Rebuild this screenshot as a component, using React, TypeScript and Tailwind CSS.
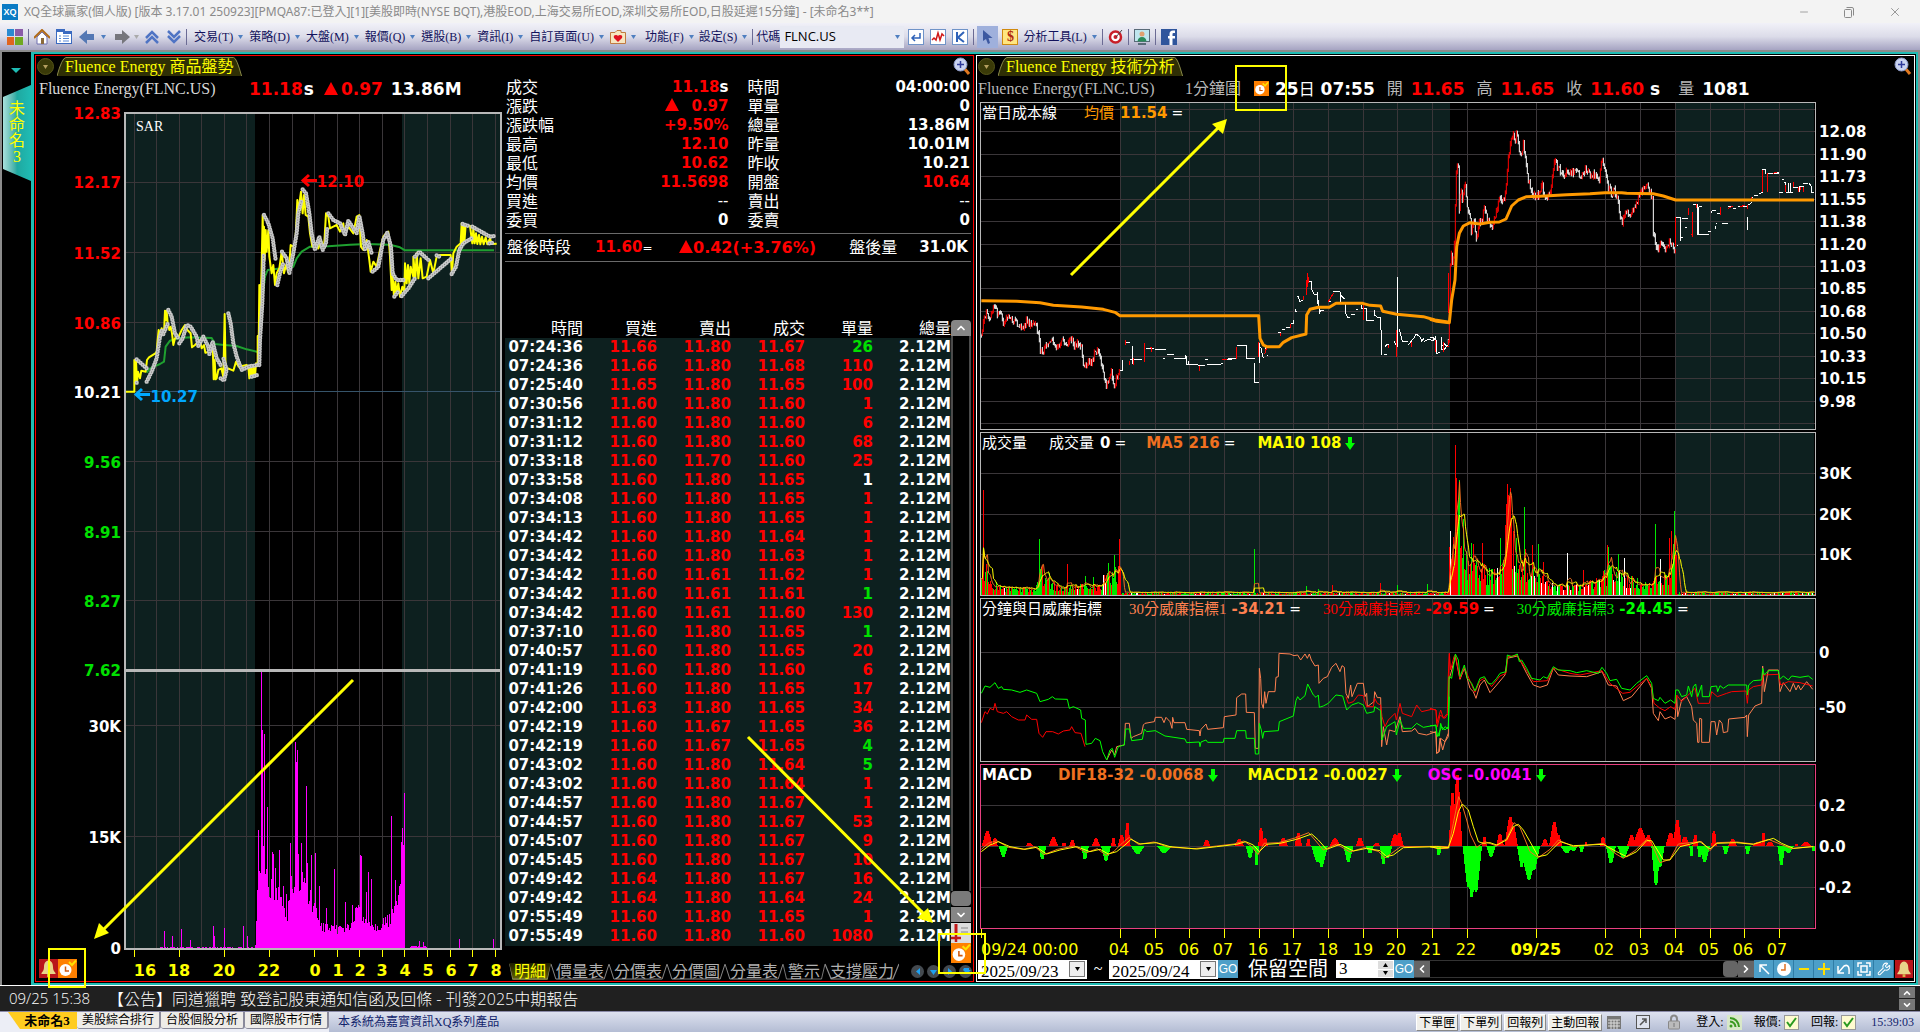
import { ReactNode } from "react";
import clsx from "clsx";
import { ChevronDown, ChevronLeft, ChevronRight, ChevronUp, Minus, Wrench, X } from "lucide-react";

const CJK = "font-['Liberation_Serif','Noto_Sans_CJK_TC',sans-serif]";
const NUM = "font-['DejaVu_Sans','Noto_Sans_CJK_TC',sans-serif] font-bold";

const GRID = "#3a3639";
const SHADE = "#0d201f";

/* ---------- data ---------- */

const TICKS = `07:24:36 11.66 11.80 11.67 26 g
07:24:36 11.66 11.80 11.68 110 r
07:25:40 11.65 11.80 11.65 100 r
07:30:56 11.60 11.80 11.60 1 r
07:31:12 11.60 11.80 11.60 6 r
07:31:12 11.60 11.80 11.60 68 r
07:33:18 11.60 11.70 11.60 25 r
07:33:58 11.60 11.80 11.65 1 w
07:34:08 11.60 11.80 11.65 1 r
07:34:13 11.60 11.80 11.65 1 r
07:34:42 11.60 11.80 11.64 1 r
07:34:42 11.60 11.80 11.63 1 r
07:34:42 11.60 11.61 11.62 1 r
07:34:42 11.60 11.61 11.61 1 g
07:34:42 11.60 11.61 11.60 130 r
07:37:10 11.60 11.80 11.65 1 g
07:40:57 11.60 11.80 11.65 20 r
07:41:19 11.60 11.80 11.60 6 r
07:41:26 11.60 11.80 11.65 17 r
07:42:00 11.63 11.80 11.65 34 r
07:42:19 11.60 11.67 11.65 36 r
07:42:19 11.60 11.67 11.65 4 g
07:43:02 11.60 11.80 11.64 5 g
07:43:02 11.60 11.80 11.64 1 r
07:44:57 11.60 11.80 11.67 1 r
07:44:57 11.60 11.80 11.67 53 r
07:45:07 11.60 11.80 11.67 9 r
07:45:45 11.60 11.80 11.67 10 r
07:49:42 11.64 11.80 11.67 16 r
07:49:42 11.64 11.80 11.64 24 r
07:55:49 11.60 11.80 11.65 1 r
07:55:49 11.60 11.80 11.60 1080 r`
  .split("\n")
  .map((row) => row.split(" "));

const QUOTES: [string, ReactNode, string, string, ReactNode, string][] = [
  ["成交", <>11.18<span className="text-white">s</span></>, "text-[#ff0000]", "時間", "04:00:00", "text-white"],
  ["漲跌", <><UpMark /><span className="ml-3">0.97</span></>, "text-[#ff0000]", "單量", "0", "text-white"],
  ["漲跌幅", "+9.50%", "text-[#ff0000]", "總量", "13.86M", "text-white"],
  ["最高", "12.10", "text-[#ff0000]", "昨量", "10.01M", "text-white"],
  ["最低", "10.62", "text-[#ff0000]", "昨收", "10.21", "text-white"],
  ["均價", "11.5698", "text-[#ff0000]", "開盤", "10.64", "text-[#ff0000]"],
  ["買進", "--", "text-white font-normal", "賣出", "--", "text-white font-normal"],
  ["委買", "0", "text-white", "委賣", "0", "text-white"],
];

type Pt = [number, number];
const pts = (s: string) => s.trim().split(/\s+/).map((p) => p.split(",").map(Number) as Pt);

// small seeded generator, keeps the traces stable between renders
function rng(seed: number) {
  let s = seed;
  return () => {
    s = (s * 1103515245 + 12345) % 2147483648;
    return s / 2147483648;
  };
}

function at(points: Pt[], x: number) {
  for (let i = 1; i < points.length; i++) {
    const [x0, y0] = points[i - 1];
    const [x1, y1] = points[i];
    if (x <= x1) return y0 + ((y1 - y0) * (x - x0)) / (x1 - x0 || 1);
  }
  return points[points.length - 1][1];
}

// one-minute candles around a guide line; rising ones go to `up`
function candles(src: string, seed: number) {
  const p = pts(src);
  const rand = rng(seed);
  let up = "";
  let down = "";
  let prev = p[0][1];
  for (let x = p[0][0]; x <= p[p.length - 1][0]; x += 3) {
    const y = at(p, x) + (rand() - 0.5) * 20;
    const a = Math.min(prev, y) - rand() * 9;
    const b = Math.max(prev, y) + rand() * 9;
    const d = `M${x} ${a.toFixed(0)}V${b.toFixed(0)}`;
    if (y < prev - 3) up += d;
    else down += d;
    prev = y;
  }
  return { up, down };
}

/* ---------- traces (units: a third of a plot unit) ---------- */

const YELLOW =
  "372,875 403,875 403,780 405,848 408,782 411,850 414,815 420,835 424,812 437,815 441,780 447,772 466,760 470,755 472,730 476,690 480,705 485,685 492,700 495,632 498,660 500,632 503,670 508,690 512,680 516,700 520,735 525,715 535,712 545,690 555,675 562,690 572,700 576,742 585,735 600,720 605,745 612,735 616,758 630,755 638,735 641,838 644,780 647,838 650,835 655,810 664,805 670,830 674,642 677,820 684,805 700,812 708,785 716,800 740,795 745,800 748,835 752,795 756,832 760,800 765,830 768,790 773,795 773,708 776,740 778,555 780,640 783,560 785,500 788,345 790,460 792,380 794,480 797,390 800,455 805,390 808,470 815,520 820,495 825,555 830,520 838,505 845,455 852,520 858,495 866,520 872,435 880,440 886,430 890,345 892,300 895,340 897,320 903,275 908,340 912,285 917,345 925,350 930,400 937,440 945,430 955,445 963,420 972,445 978,340 985,350 990,385 1000,380 1010,375 1020,395 1030,370 1033,405 1045,380 1060,400 1070,350 1078,345 1083,440 1090,450 1100,420 1108,480 1112,515 1120,485 1130,500 1140,450 1150,410 1158,400 1165,395 1170,470 1175,570 1178,530 1182,590 1186,545 1190,580 1195,550 1200,590 1207,560 1213,575 1215,490 1220,550 1224,495 1228,550 1232,500 1240,530 1240,470 1246,535 1250,460 1255,535 1262,475 1268,535 1280,530 1290,480 1300,520 1310,470 1320,465 1352,465 1356,520 1360,460 1370,440 1382,430 1385,370 1387,430 1390,372 1393,430 1397,375 1410,378 1417,430 1420,385 1424,430 1428,400 1432,432 1437,405 1441,433 1446,410 1451,433 1457,412 1462,433 1470,415 1475,432 1490,431";
const AVG =
  "440,818 450,805 480,792 492,785 497,740 510,722 535,715 570,712 635,714 645,732 672,735 710,738 740,748 770,755 776,755 780,680 788,590 795,530 803,510 880,500 890,475 905,455 930,440 985,439 1050,434 1100,432 1170,434 1200,442 1215,451 1482,451";
const SAR = [
  "410,778 440,805",
  "410,848 411,846",
  "440,845 455,815 470,775 480,710 487,688",
  "490,702 503,672",
  "505,630 515,650 525,700 537,718",
  "538,730 548,715 560,675 572,680 590,710 595,738 610,710 625,740 628,762 638,725 650,775 665,800",
  "662,835 672,842 680,810 670,775",
  "685,640 692,670 700,730 710,770 725,810 745,800 772,795",
  "755,830 772,825",
  "778,795 780,720 787,610 790,520 791,460",
  "792,345 805,370 818,415 827,480",
  "832,555 840,520 850,490",
  "846,455 860,475 868,520 880,460 890,400 895,340 905,300",
  "908,268 918,280 928,340 935,400 945,450 958,410 968,450 978,430 982,380",
  "985,340 1000,360 1020,370 1035,405 1045,362 1060,385 1070,400 1078,348 1088,400 1095,450 1105,425 1115,460",
  "1118,515 1135,500 1150,420 1162,398 1173,440 1178,520 1190,540 1212,540",
  "1183,590 1195,575",
  "1205,588 1225,565 1245,535",
  "1245,470 1258,455 1285,480",
  "1285,535 1320,505 1355,475",
  "1310,466 1318,470",
  "1355,522 1368,500 1378,450 1390,430 1415,415",
  "1388,372 1405,378",
  "1417,380 1470,410 1485,408",
  "1468,430 1480,428",
];

const LEFT_SPIKES = pts(
  "775,810 785,333 788,510 793,522 790,858 802,741 817,877 821,882 826,925 838,870 850,978 859,1003 871,849 886,546 889,606 892,570 895,882 904,849 907,936 919,678 922,909 934,885 946,879 958,978 979,1044 1003,927 1036,1026 1057,1035 1081,885 1084,888 1099,996 1105,936 1114,957 1174,768 1186,960 1204,846 1207,804 1210,855 1213,699 493,1114 517,1129 544,1107 572,1140 640,1098 643,1127 673,1104 730,1098 742,1128 1258,1142 1270,1146 1378,1137 1480,1137"
);

function leftVolume() {
  const rand = rng(7);
  const guide = pts("372,1161 460,1161 480,1160 765,1160 768,1150 774,980 800,960 830,1000 865,1060 872,980 900,960 925,1010 950,1060 965,1100 1000,1110 1050,1100 1075,1050 1100,1080 1130,1100 1170,1080 1195,1040 1205,900 1213,880 1216,1162 1240,1159 1275,1159 1290,1162 1490,1161");
  let d = "";
  for (let x = 374; x < 1490; x += 3) {
    let y = at(guide, x);
    y += (1162 - y) * (rand() - 0.5) * 0.5;
    if (y < 1160) d += `M${x} 1163V${y.toFixed(0)}`;
  }
  LEFT_SPIKES.forEach(([x, y]) => (d += `M${x} 1163V${y}`));
  return d;
}

const ORANGE_A =
  "34,602 140,604 210,608 250,616 335,621 400,628 435,637 450,647 866,647 870,715 880,735 890,740 928,740 940,727 965,713 1008,702 1010,645 1020,628 1045,622 1078,622 1098,610 1178,610 1200,616 1232,618 1238,634 1280,643 1360,650 1395,660 1438,667";
const ORANGE_B =
  "0,658 20,664 58,668 65,600 75,540 80,440 88,400 100,378 120,368 150,372 180,367 208,366 228,357 245,318 265,300 290,290 330,289 410,284 480,281 525,278 575,278 590,280 670,281 700,288 737,300 1152,300";

const PRICE_A = candles(
  "34,705 40,665 50,635 60,650 75,612 80,640 95,650 98,675 110,645 125,660 140,670 150,682 165,680 170,660 185,680 195,675 205,700 210,750 218,760 228,735 238,735 247,710 256,740 268,735 273,718 290,735 303,715 315,740 325,730 335,745 338,780 345,800 355,780 368,785 376,752 390,770 398,810 404,840 411,860 418,830 425,815 434,868 440,825 450,812",
  3
);
const PRICE_B = candles(
  "55,720 58,640 60,540 62,440 68,490 74,420 77,260 80,190 85,205 88,340 93,250 97,310 105,235 112,330 120,345 124,400 132,360 140,420 148,360 155,370 162,315 170,350 180,380 190,370 200,330 210,295 222,305 230,255 234,180 240,140 248,100 255,120 260,95 267,145 275,165 280,130 287,180 290,215 298,250 306,275 315,290 325,285 337,255 342,290 352,285 360,280 368,225 373,178 382,200 390,210 405,225 412,215 430,220 440,210 452,240 467,205 480,230 490,220 508,235 515,185 525,205 535,260 545,285 552,270 562,290 570,340 578,370 585,325 600,350 608,325 615,330 625,290 640,265 650,245 658,270 668,300 670,400 678,430 685,455 690,415 705,455 722,420 732,450 737,440",
  11
);
const THIN_A = {
  white:
    "M450 812H457V780M466 728H480M487 737V792M480 778H517M487 790H493M528 747H553M555 748H588M590 763H612M580 775H585M612 776H645L648 766L650 795H684M656 782V795M684 797H705M705 778H713M711 794H740L760 791M762 778H785M775 776H798M800 737H829V776H854M853 790V848H866M866 770L868 730L870 790M872 740L880 775M884 745L892 742M890 766H893M925 697H933M935 690H945M948 683H960M962 672H970V660M976 634H980M978 628V634M983 587L990 605L1000 600M1014 530L1016 545H1024L1026 570L1032 583H1042L1044 575V612M1046 600L1048 640L1052 632H1061M1075 605H1083M1090 576H1110L1112 605M1112 585L1124 598M1126 610L1128 642L1133 653H1140M1142 643H1155M1158 630H1165M1176 616V625H1188L1190 662H1213M1214 630V645L1222 652H1232L1235 765M1243 765H1250M1245 740L1250 735H1258M1272 722L1277 735M1282 532V740M1288 688L1292 705L1297 725H1315M1315 735L1325 722L1333 712L1338 702L1350 710L1355 722L1362 715M1362 725L1375 718L1390 722L1396 713L1400 760L1408 758M1412 728L1425 748L1430 738",
  red: "M466 720V736M523 730V785M540 742H546V757M480 782V795M490 775V795M690 797V812M757 778H770M800 776V740M866 725V770M884 762L890 742M932 707V700M962 672V685M1001 600V588M1009 585L1012 520V560M1015 530V548M1075 605L1090 580M1182 610V660M1279 690V770M1256 735V745M1325 740V725M1422 755V725M1437 520V640M1430 740H1436",
};
const THIN_B = {
  white:
    "M0 712H10L14 720H18L20 763M24 757H30M34 711V748H44M42 728L47 737H54M738 352H752V423M740 438H745M750 412H759M757 357H773V353M765 382H770M788 313H803V405M806 320H815M804 405H836M804 313V405M807 320V403M834 395H842M843 338L846 332H858M862 341H870M858 372H862M858 378V388M876 370H894M895 320H905M910 325H918M925 320H950M953 352V390M956 315L965 308M964 293H970M972 288L985 285M988 282L998 277M995 208H1006V221M1012 220H1046M1036 217H1046M1057 238H1062M1062 247H1068V262M1047 277H1060M1068 277H1088M1075 250V275M1082 250V278M1088 262H1110V277M1108 260H1122M1120 250H1135M1138 250L1145 262V277H1152",
  red: "M18 720V755M42 752V728M55 735V720M737 440V352M775 325V345M787 335V410M783 405H790M800 313V325M871 320V345M895 325L908 318M930 320L945 316M952 315V328M965 300V292M998 277V210M1012 275V220M1030 220L1040 217M1066 277V255M1090 262V246M1105 277V262M1112 262V270M1120 277V262",
};

// volume per minute: guide height plus a list of known spikes
const VOL_SPIKES = pts(
  "983,105 1039,56 1042,29 1049,22 1067,31 1085,19 1093,18 1103,20 1108,32 1114,40 1119,56 1254,46 1306,9 1318,6 1332,10 1380,12 1397,10 1427,11 1449,48 1450,64 1452,40 1455,150 1456,117 1457,80 1458,97 1459,115 1463,76 1471,52 1473,51 1482,52 1500,57 1505,70 1506,91 1507,111 1508,100 1509,99 1510,107 1513,64 1516,57 1524,88 1525,46 1532,50 1538,51 1543,33 1567,42 1583,25 1607,50 1608,48 1618,41 1624,37 1655,71 1660,36 1669,57 1671,64 1674,84 1675,60 1676,40"
);
const VOL = (() => {
  const rand = rng(23);
  const guide = pts("981,12 984,30 990,12 1005,6 1035,5 1040,22 1048,14 1060,6 1080,8 1100,7 1106,18 1120,28 1121,1 1449,1 1450,30 1456,60 1462,45 1470,26 1500,20 1506,60 1512,55 1518,28 1540,16 1552,9 1575,7 1600,14 1608,24 1625,16 1650,9 1656,20 1668,18 1676,60 1677,1 1816,1");
  const v: number[] = [];
  for (let x = 981; x < 1815; x++) {
    const g = at(guide, x);
    v.push(Math.max(g > 2 ? g * (0.4 + rand() * 0.95) : rand() * 2.2, 0.5));
  }
  VOL_SPIKES.forEach(([x, h]) => (v[x - 981] = h));
  return v;
})();

function volumeBars() {
  const rand = rng(5);
  const out = { red: "", green: "", white: "" };
  VOL.forEach((h, i) => {
    const x = 981 + i;
    const r = rand();
    const red = x === 983 || x === 1119 || (x > 1450 && x < 1458) || (x > 1504 && x < 1512);
    const green = x === 1039 || x === 1254 || x === 1524 || x === 1674 || x === 1655 || x === 1459;
    const key = red ? "red" : green ? "green" : x === 1450 || x === 1567 ? "white" : r < 0.48 ? "red" : r < 0.94 ? "green" : "white";
    out[key] += `M${x + 0.5} 594.5V${(594.5 - h).toFixed(1)}`;
  });
  return out;
}
const BARS = volumeBars();

const average = (n: number) =>
  VOL.map((_, i) => {
    const part = VOL.slice(Math.max(0, i - n + 1), i + 1);
    return `${981.5 + i},${(593.5 - part.reduce((a, b) => a + b, 0) / part.length).toFixed(1)}`;
  }).join(" ");

const WR = {
  orangeA:
    "410,990 425,960 434,975 440,950 452,947 463,945 466,880 478,880 483,925 490,920 515,910 520,885 525,880 553,875 556,862 575,862 582,878 588,862 600,875 606,895 608,862 612,878 645,878 650,898 688,902 690,918 693,898 708,882 713,898 760,893 763,860 798,855 800,803 815,792 827,792 829,847 853,848 856,955 866,955 868,715 872,745 875,820 880,835 884,785 888,820 895,785 915,785 918,742 925,740 927,670 960,672 972,677 983,675 992,690 1005,672 1012,685 1018,672 1024,690 1035,708 1045,705 1047,760 1060,745 1072,740 1085,712 1098,700 1110,725 1116,707 1123,712 1128,790 1135,805 1142,765 1146,800 1162,760 1180,760 1185,800 1190,790 1192,830 1212,815 1214,785 1222,803 1232,803 1235,950 1240,890 1250,945 1258,900 1275,905 1290,860 1297,905 1325,903 1335,895 1345,910 1370,915 1398,905 1400,970 1408,965 1412,925 1425,935 1435,910",
  redA:
    "34,878 45,845 52,852 60,835 70,840 75,820 82,845 100,850 110,845 125,860 145,870 165,870 170,855 185,868 200,868 207,910 218,922 228,905 248,905 265,912 280,903 300,900 305,890 315,908 333,910 345,950",
  redA2:
    "1128,800 1135,820 1150,815 1165,795 1180,797 1190,830 1210,830 1214,805 1222,820 1232,825 1236,860 1245,890 1255,870 1275,850 1279,870 1290,820 1297,850 1325,860 1340,825 1355,845 1385,838 1398,840 1402,890 1410,855 1425,865 1435,850 1438,670",
  greenA:
    "34,790 45,768 60,772 75,758 85,775 95,770 100,778 125,780 150,787 170,780 200,790 210,815 235,808 247,800 256,807 292,808 298,835 310,830 332,840 335,865 346,870 348,943 365,940 376,925 390,932 398,965 410,990 420,960 427,955 434,982 445,950 463,945 467,897 478,897 485,932 517,928 523,897 530,905 556,902 585,918 612,922 645,927 650,938 688,936 690,950 693,936 708,930 713,937 760,937 762,925 795,925 800,902 827,902 829,925 853,925 856,972 866,972 868,880 874,900 878,925 882,905 925,902 928,875 970,858 978,812 983,800 990,810 1005,797 1013,762 1030,795 1038,802 1045,795 1048,832 1060,828 1075,820 1098,795 1118,798 1130,840 1145,825 1165,818 1180,825 1190,850 1212,845 1214,830 1232,842 1236,930 1250,890 1275,875 1279,915 1290,870 1300,895 1325,895 1340,880 1360,892 1398,885 1402,920 1415,890 1425,900 1435,890 1438,800",
  greenB:
    "0,887 18,887 20,915 28,918 32,880 38,900 45,890 55,897 57,740 65,745 76,672 85,690 90,740 103,705 112,745 125,760 135,783 150,745 163,740 175,760 185,762 200,745 210,730 228,725 232,675 245,680 262,672 268,695 275,690 290,715 305,745 330,750 340,740 352,745 370,710 385,720 420,722 440,728 470,722 505,730 516,712 530,730 540,752 560,748 575,775 600,780 620,760 650,737 665,760 670,805 685,812 690,802 705,820 722,810 735,820 737,780 745,780 755,800 770,795 775,768 785,800 790,770 797,762 803,800 815,765 817,800 838,800 843,770 860,768 863,785 870,767 880,775 895,765 950,765 952,795 956,765 970,752 995,750 998,715 1003,735 1015,722 1045,722 1050,748 1060,738 1075,750 1085,738 1110,742 1135,738 1148,748",
  redB:
    "0,835 18,840 20,880 32,840 40,865 52,850 55,735 58,670 62,720 72,680 76,675 90,745 103,712 125,765 135,787 150,752 163,745 185,770 210,738 228,730 234,680 262,676 290,722 310,755 352,752 370,714 420,730 450,735 516,722 540,760 578,790 600,787 650,745 665,770 672,820 690,835 705,842 722,830 735,838 740,795 755,815 775,795 795,775 805,820 838,820 845,785 862,800 890,790 905,785 948,783 952,820 956,780 970,770 995,765 1000,735 1045,733 1052,765 1075,755 1110,758 1148,768",
  orangeB:
    "0,905 18,908 20,970 26,965 30,925 38,960 45,935 55,920 57,750 76,680 90,748 103,715 120,775 130,785 138,805 150,765 163,750 180,788 200,765 225,735 232,685 262,678 275,700 290,730 310,765 330,772 352,765 370,715 385,735 420,738 470,740 516,725 535,765 560,768 580,812 605,800 650,745 665,775 670,850 685,872 690,845 705,867 722,860 735,868 740,800 743,860 755,810 770,800 785,830 790,870 800,880 803,937 807,937 809,865 815,867 815,937 838,937 843,875 855,875 860,915 868,870 876,880 880,908 893,905 896,867 945,862 950,855 952,920 956,855 975,828 995,820 998,708 1003,785 1015,720 1045,720 1050,785 1060,758 1080,785 1090,760 1098,780 1105,765 1112,780 1130,755 1148,778",
};

// [centre, peak y, half width]
const OSC_A: [number, number, number][] = [
  [52, 1203, 17], [75, 1225, 9], [178, 1238, 12], [250, 1222, 15], [282, 1238, 8], [307, 1230, 10], [378, 1225, 13], [430, 1225, 8], [455, 1215, 12], [472, 1180, 10], [710, 1230, 12], [808, 1228, 15], [873, 1195, 9], [885, 1225, 10], [940, 1225, 15], [985, 1210, 12], [1015, 1228, 8], [1095, 1225, 17], [1170, 1223, 13], [1220, 1238, 12], [1275, 1212, 15], [1288, 1210, 14],
  [100, 1280, 14], [217, 1288, 12], [345, 1288, 12], [408, 1292, 15], [503, 1273, 20], [583, 1270, 22], [840, 1283, 13], [860, 1305, 8], [1042, 1295, 18], [1055, 1310, 18], [1135, 1295, 15], [1200, 1270, 12], [1240, 1303, 10], [1253, 1285, 14], [1406, 1275, 8],
];
const OSC_B: [number, number, number][] = [
  [67, 1090, 11], [82, 1035, 15], [163, 1222, 8], [210, 1213, 12], [241, 1160, 18], [250, 1190, 14], [345, 1228, 12], [373, 1175, 16], [385, 1215, 12], [468, 1235, 6], [519, 1222, 10], [605, 1215, 15], [631, 1193, 24], [655, 1215, 14], [722, 1208, 16], [742, 1170, 14], [765, 1220, 16], [796, 1216, 9], [852, 1204, 9], [908, 1228, 14], [985, 1235, 18], [1000, 1210, 6], [1020, 1235, 14], [1100, 1243, 6], [1128, 1235, 16],
  [27, 1275, 8], [115, 1370, 17], [125, 1400, 20], [138, 1385, 18], [183, 1280, 14], [275, 1310, 14], [297, 1350, 26], [312, 1320, 18], [410, 1270, 18], [430, 1262, 15], [455, 1265, 8], [543, 1300, 15], [580, 1285, 18], [678, 1365, 14], [690, 1310, 14], [784, 1278, 6], [808, 1280, 7], [824, 1297, 16], [887, 1272, 10], [953, 1272, 9], [1054, 1305, 12], [1075, 1270, 16], [1150, 1262, 5],
];
const MACD = {
  yellowA:
    "34,1265 60,1245 85,1235 120,1250 165,1258 200,1252 230,1272 270,1260 320,1250 360,1265 390,1258 415,1272 440,1265 465,1245 483,1228 510,1242 560,1238 600,1250 680,1257 740,1250 800,1243 827,1235 850,1245 868,1265 890,1243 930,1240 980,1228 1025,1212 1045,1230 1070,1258 1110,1243 1150,1263 1190,1255 1230,1262 1250,1280 1270,1275 1300,1253 1400,1250 1438,1253",
  orangeA:
    "34,1258 55,1240 80,1232 115,1252 160,1258 195,1250 222,1274 262,1258 312,1248 350,1268 382,1256 408,1276 432,1264 458,1238 478,1222 505,1243 552,1236 592,1251 672,1256 732,1249 792,1242 822,1233 845,1250 864,1274 882,1240 925,1238 975,1224 1016,1208 1035,1230 1060,1260 1100,1242 1140,1266 1182,1253 1225,1264 1244,1284 1262,1272 1292,1250 1400,1249 1438,1250",
  yellowB:
    "0,1250 25,1255 55,1253 70,1210 85,1145 97,1122 115,1140 130,1190 145,1235 160,1240 180,1238 200,1245 230,1230 250,1190 265,1183 280,1200 300,1235 325,1280 350,1275 390,1235 430,1247 520,1243 560,1265 590,1280 620,1265 650,1232 665,1232 700,1290 720,1290 750,1250 790,1240 810,1235 840,1257 860,1240 920,1238 970,1243 1030,1225 1055,1240 1090,1255 1150,1250",
  orangeB:
    "0,1250 25,1256 55,1255 70,1180 86,1100 95,1120 110,1170 122,1215 140,1252 165,1235 200,1248 230,1225 252,1178 270,1192 300,1265 325,1283 360,1258 385,1230 430,1250 520,1240 555,1270 580,1285 615,1262 650,1228 665,1240 690,1298 720,1288 745,1242 790,1237 815,1235 840,1262 860,1238 920,1236 970,1242 1015,1228 1050,1242 1085,1256 1150,1249",
};

/* ---------- drawing helpers ---------- */

const third = (x: number, y: number) => `translate(${x} ${y}) scale(0.33333)`;

function Trace({ points, x, y, color, width = 1 }: { points: string; x: number; y: number; color: string; width?: number }) {
  return (
    <polyline points={points} transform={third(x, y)} fill="none" stroke={color} strokeWidth={width} strokeLinejoin="round" vectorEffect="non-scaling-stroke" />
  );
}

function Strokes({ d, x, y, color }: { d: string; x: number; y: number; color: string }) {
  return <path d={d} transform={third(x, y)} fill="none" stroke={color} strokeWidth={1} vectorEffect="non-scaling-stroke" />;
}

function Humps({ list, x, y }: { list: [number, number, number][]; x: number; y: number }) {
  return (
    <g transform={third(x, y)} shapeRendering="crispEdges">
      {list.map(([c, p, w], i) => (
        <path
          key={i}
          d={`M${c - w} 1249L${c - w * 0.7} ${1249 + (p - 1249) * 0.4}L${c - 4} ${p}H${c + 4}L${c + w * 0.7} ${1249 + (p - 1249) * 0.4}L${c + w} 1249Z`}
          fill={p < 1249 ? "#ff0000" : "#00ff00"}
        />
      ))}
    </g>
  );
}

function UpMark() {
  return (
    <svg viewBox="0 0 14 13" className="inline-block w-[14px] h-[13px] align-baseline" fill="currentColor">
      <path d="M7 0L14 13H0Z" />
    </svg>
  );
}

function DownMark() {
  return (
    <svg viewBox="0 0 10 13" className="inline-block w-[10px] h-[13px] ml-1" fill="#00ff00">
      <path d="M3 0H7V6H10L5 13L0 6H3Z" />
    </svg>
  );
}

function AxisY({ labels, top, height, className }: { labels: [string, number, string?][]; top: number; height: number; className: string }) {
  return (
    <div className={clsx("relative shrink-0 text-[15px] leading-[18px]", NUM, className)}>
      {labels.map(([text, y, color], i) => (
        <span key={i} className={clsx("absolute inset-x-0 -translate-y-1/2", color)} style={{ top: `${((y - top) / height) * 100}%` }}>
          {text}
        </span>
      ))}
    </div>
  );
}

/* ---------- icons ---------- */

function ClockIcon({ className }: { className: string }) {
  return (
    <svg viewBox="0 0 19 19" className={className}>
      <rect width="19" height="19" fill="#ff8000" />
      <circle cx="7.500" cy="11" r="6" fill="#fff" />
      <path d="M7.500 7.500V12H11" stroke="#d05a10" strokeWidth="1.500" fill="none" />
      <path d="M11 3L14 6L18 1.500" stroke="#ffe000" strokeWidth="2" fill="none" />
    </svg>
  );
}

function BellIcon({ className }: { className: string }) {
  return (
    <svg viewBox="0 0 19 19" className={className}>
      <rect width="19" height="19" fill="#b9151a" />
      <path d="M9.500 1.500C6 2 5 5 5 8C5 11 4 12.500 2.500 14V15H16.500V14C15 12.500 14 11 14 8C14 5 13 2 9.500 1.500Z" fill="#e9d58a" />
      <rect x="8" y="15" width="3" height="3" fill="#d8b04a" />
    </svg>
  );
}

function ZoomIcon() {
  return (
    <svg viewBox="0 0 18 18" className="w-[18px] h-[18px]">
      <path d="M11 11L16 17" stroke="#e07820" strokeWidth="3" />
      <circle cx="7.500" cy="7.500" r="6.500" fill="#c9d3f0" stroke="#8f9cc8" />
      <path d="M7.500 4V11M4 7.500H11" stroke="#2e3a9a" strokeWidth="1.500" />
    </svg>
  );
}

/* ---------- frame ---------- */

function TitleBar() {
  return (
    <header className="h-[23px] flex items-center bg-[#f3f3f3] text-[#8a8a8a] pl-[2px] shrink-0">
      <span className="size-4 bg-[#0a7bc4] text-white text-[9px] font-bold leading-4 text-center font-['Liberation_Sans',sans-serif]">XQ</span>
      <h1 className="ml-[6px] text-[12px] font-['Noto_Sans','Noto_Sans_CJK_TC',sans-serif] whitespace-nowrap">
        XQ全球贏家(個人版) [版本 3.17.01 250923][PMQA87:已登入][1][美股即時(NYSE BQT),港股EOD,上海交易所EOD,深圳交易所EOD,日股延遲15分鐘] - [未命名3**]
      </h1>
      <div className="ml-auto flex items-center gap-8 pr-[18px]">
        <button aria-label="Minimize"><Minus className="size-3" strokeWidth={1.5} /></button>
        <button aria-label="Restore" className="mx-px">
          <svg viewBox="0 0 12 12" className="size-3" fill="none" stroke="currentColor">
            <rect x="1.500" y="3.500" width="7" height="8" rx="1" />
            <path d="M3.500 1.500H9Q10.500 1.500 10.500 3V9.500" />
          </svg>
        </button>
        <button aria-label="Close"><X className="size-[14px]" strokeWidth={1.5} /></button>
      </div>
    </header>
  );
}

function Caret({ className }: { className?: string }) {
  return (
    <svg viewBox="0 0 5 4" className={clsx("w-[5px] h-1", className ?? "text-[#4f7fc0]")} fill="currentColor">
      <path d="M0 0H5L2.500 4Z" />
    </svg>
  );
}

const Sep = () => <i className="w-px h-4 bg-[#6b6b94] mx-[5px]" />;

function Menu({ children }: { children: ReactNode }) {
  return (
    <button className="flex items-center gap-[5px] pl-[5px] whitespace-nowrap">
      {children}
      <Caret />
    </button>
  );
}

function Tile({ children, label }: { children: ReactNode; label: string }) {
  return (
    <button aria-label={label} className="size-4 ml-[6px] bg-white border border-[#6f93c8]">
      <svg viewBox="0 0 14 14" className="size-full" fill="none">{children}</svg>
    </button>
  );
}

function ToolBar() {
  return (
    <nav className={clsx("h-[27px] shrink-0 flex items-center pl-[7px] text-[12px] text-[#12125c] bg-linear-to-b from-[#f1f1f8] via-[#dcdce9] to-[#a6a4c2]", CJK)}>
      <button aria-label="Layout">
        <svg viewBox="0 0 16 16" className="size-4">
          <rect width="7" height="7" fill="#2a8ad0" />
          <rect x="8" width="8" height="7" fill="#8a5ba8" />
          <rect y="8" width="7" height="8" fill="#e0641e" />
          <rect x="8" y="8" width="8" height="8" fill="#6fa820" />
        </svg>
      </button>
      <Sep />
      <button aria-label="Home">
        <svg viewBox="0 0 16 16" className="size-4">
          <path d="M3 8V15H13V8L8 3Z" fill="#fff" stroke="#6f6fae" />
          <path d="M0 9L8 1L16 9" fill="none" stroke="#b06a18" strokeWidth="2" />
          <rect x="7" y="9" width="3" height="6" fill="#8a6a3a" />
        </svg>
      </button>
      <button aria-label="Page" className="ml-[6px]">
        <svg viewBox="0 0 16 16" className="size-4">
          <rect x="0.500" y="2.500" width="15" height="12" fill="#fff" stroke="#3a6ac0" />
          <path d="M0 1H8V4H16" fill="none" stroke="#3a6ac0" strokeWidth="2" />
          <path d="M3 7H5M7 7H13M3 9.500H5M7 9.500H13M3 12H5M7 12H13" stroke="#5a8ad8" />
        </svg>
      </button>
      <button aria-label="Back" className="ml-[7px] flex items-center gap-[6px]">
        <svg viewBox="0 0 16 14" className="w-4 h-[14px]"><path d="M8 0V4H15V10H8V14L0 7Z" fill="#5478b4" /></svg>
        <Caret />
      </button>
      <button aria-label="Forward" className="ml-2 flex items-center gap-1">
        <svg viewBox="0 0 16 14" className="w-4 h-[14px]"><path d="M8 0V4H1V10H8V14L16 7Z" fill="#76767c" /></svg>
        <Caret className="text-[#aaa]" />
      </button>
      <button aria-label="Previous page" className="ml-[6px]">
        <svg viewBox="0 0 14 14" className="size-[14px]" fill="none" stroke="#4f74c4" strokeWidth="2.500"><path d="M1 8L7 2L13 8M1 13L7 7L13 13" /></svg>
      </button>
      <button aria-label="Next page" className="ml-2">
        <svg viewBox="0 0 14 14" className="size-[14px]" fill="none" stroke="#4f74c4" strokeWidth="2.500"><path d="M1 1L7 7L13 1M1 6L7 12L13 6" /></svg>
      </button>
      <Sep />
      <div className="flex -ml-[3px] mr-[6px] gap-px">
        {["交易(T)", "策略(D)", "大盤(M)", "報價(Q)", "選股(B)", "資訊(I)", "自訂頁面(U)"].map((m) => <Menu key={m}>{m}</Menu>)}
      </div>
      <button aria-label="Favorites" className="flex items-center gap-[5px] mr-1">
        <svg viewBox="0 0 16 14" className="w-4 h-[14px]">
          <path d="M0.500 2.500H5L7 0.500H11V2.500H15.500V13.500H0.500Z" fill="#f6e6c0" stroke="#c07a40" />
          <path d="M8 12L4 8Q3 5 6 5Q7.500 5 8 6Q8.500 5 10 5Q13 5 12 8Z" fill="#e01020" />
        </svg>
        <Caret />
      </button>
      <div className="flex">
        <Menu>功能(F)</Menu>
        <Menu>設定(S)</Menu>
      </div>
      <Sep />
      <label htmlFor="symbol" className="-ml-[2px]">代碼</label>
      <div className="flex items-center h-[22px] w-[124px] bg-[#e8eaf3] pr-1">
        <input id="symbol" defaultValue="FLNC.US" className="min-w-0 flex-1 pl-1 bg-transparent text-[13px] text-black outline-none font-['Open_Sans',sans-serif]" />
        <Caret />
      </div>
      <div className="flex items-center -ml-[2px]">
        <Tile label="Enter"><path d="M11 3V8H3M6 5L3 8L6 11" stroke="#2f62b8" strokeWidth="1.500" /></Tile>
        <Tile label="Trend"><path d="M1 10L3 8L5 10L7 3L9 10L11 4L13 6" stroke="#d01818" strokeWidth="1.500" /></Tile>
        <Tile label="K line"><path d="M4 2V12M11 2L5 7.500L11 12" stroke="#2f62b8" strokeWidth="2" /></Tile>
      </div>
      <Sep />
      <button aria-label="Pointer" className="-ml-[2px] w-[21px] h-[22px] flex items-center justify-center bg-[#9fb0dc]">
        <svg viewBox="0 0 10 14" className="w-[10px] h-[14px]" fill="#3c58a0"><path d="M0 0V11L3 9L5 14L7 13L5.500 8H9.500Z" /></svg>
      </button>
      <button className="ml-1 size-4 bg-[#ffe680] border border-[#d08a10] text-[#b02a10] text-[14px] leading-[14px] font-bold">$</button>
      <Menu>分析工具(L)</Menu>
      <Sep />
      <button aria-label="Target">
        <svg viewBox="0 0 15 15" className="size-[15px]">
          <circle cx="7.500" cy="8" r="5.500" fill="#fff" stroke="#c81e28" strokeWidth="2.500" />
          <circle cx="7.500" cy="8" r="2" fill="#c81e28" />
          <path d="M8 8L14 1" stroke="#444" />
        </svg>
      </button>
      <Sep />
      <button aria-label="Service">
        <svg viewBox="0 0 16 16" className="size-4">
          <rect x="0.500" y="0.500" width="15" height="12" fill="#bfe6ee" stroke="#5a6a78" />
          <circle cx="8" cy="5" r="2.500" fill="#e0a070" />
          <path d="M3.500 12.500Q4 8 8 8Q12 8 12.500 12.500Z" fill="#2a8a5a" />
          <rect x="4" y="14" width="8" height="2" fill="#5a6a78" />
        </svg>
      </button>
      <Sep />
      <a href="#facebook" aria-label="Facebook">
        <svg viewBox="0 0 16 16" className="size-4">
          <rect width="16" height="16" fill="#2f559c" />
          <path d="M14 4H12.500Q11.500 4 11.500 5V7H14V9.500H11.500V16H8.500V9.500H7V7H8.500V5Q8.500 1.500 12 1.500H14Z" fill="#fff" />
        </svg>
      </a>
    </nav>
  );
}

function PanelTab({ title }: { title: string }) {
  return (
    <div className="h-5 shrink-0 flex items-start pl-px pt-px">
      <button aria-label="Panel menu" className="mt-px size-[17px] rounded-full bg-[#3a3a08] border border-[#55551a] text-[#b5a060] flex items-center justify-center">
        <Caret className="text-[#b5a060]" />
      </button>
      <h2 className={clsx("relative ml-[3px] px-2 h-[19px] leading-5 text-[16px] text-[#ffff00] whitespace-nowrap", CJK)}>
        <svg viewBox="0 0 188 19" preserveAspectRatio="none" className="absolute inset-0 size-full">
          <path d="M0 19Q5 1 9 0.500H180Q183 1 188 19" fill="#2f2f05" stroke="#8a8a4a" />
        </svg>
        <span className="relative">{title}</span>
      </h2>
      <button aria-label="Zoom" className="ml-auto mr-[2px]"><ZoomIcon /></button>
    </div>
  );
}

/* ---------- left panel ---------- */

const LX = [134, 156, 179, 201, 224, 246, 269, 292, 314, 337, 359, 382, 404, 427, 450, 472, 495];
const LX_LABELS: [string, number][] = [["16", 145], ["18", 179], ["20", 224], ["22", 269], ["0", 315], ["1", 338], ["2", 360], ["3", 382], ["4", 405], ["5", 428], ["6", 451], ["7", 473], ["8", 496]];
const LY: [string, number, string][] = [
  ["12.83", 114, "text-[#ff0000]"], ["12.17", 183, "text-[#ff0000]"], ["11.52", 254, "text-[#ff0000]"], ["10.86", 324, "text-[#ff0000]"], ["10.21", 393, "text-white"],
  ["9.56", 463, "text-[#00e000]"], ["8.91", 533, "text-[#00e000]"], ["8.27", 602, "text-[#00e000]"], ["7.62", 671, "text-[#00e000]"], ["30K", 727, "text-white"], ["15K", 838, "text-white"], ["0", 949, "text-white"],
];

function IntradayChart() {
  return (
    <svg viewBox="124 112 378 838" preserveAspectRatio="none" className="absolute inset-0 size-full">
      <rect x="124" y="112" width="131" height="838" fill={SHADE} />
      <rect x="402" y="112" width="100" height="838" fill={SHADE} />
      <g stroke={GRID} shapeRendering="crispEdges">
        {LX.map((x) => <path key={x} d={`M${x + 0.5} 112V949`} />)}
        {[182, 252, 322, 461, 531, 600, 725, 836].map((y) => <path key={y} d={`M124 ${y + 0.5}H502`} />)}
        <path d="M124 391.500H502" stroke="#36546a" />
      </g>
      <Trace points={AVG} x={0} y={100} color="#1fa030" width={2} />
      <Trace points={YELLOW} x={0} y={100} color="#ffff00" width={2} />
      {SAR.map((s) => (
        <g key={s} transform={third(0, 100)} fill="none" strokeLinecap="round">
          <polyline points={s} stroke="#c8c8c8" strokeWidth="13" strokeDasharray="0 8" />
          <polyline points={s} stroke="#707070" strokeWidth="3" strokeDasharray="0 8" />
        </g>
      ))}
      <path d={leftVolume()} transform={third(0, 560)} stroke="#ff00ff" strokeWidth="3" shapeRendering="crispEdges" />
      <g fill="none" strokeWidth="3">
        <path d="M317 180.500H303M309 175L303 180.500L309 186" stroke="#ff0000" />
        <path d="M150 394.500H136M142 389L136 394.500L142 400" stroke="#00a8ff" />
      </g>
      <g fill="none" stroke="#b8b8b8" strokeWidth="2" shapeRendering="crispEdges">
        <rect x="125" y="113" width="376" height="836" />
        <path d="M124 670.500H502" strokeWidth="3" />
      </g>
    </svg>
  );
}

function IntradayColumn() {
  return (
    <div className="flex-1 min-w-0 flex flex-col pr-[3px]">
      <div className={clsx("h-9 shrink-0 flex items-start pl-[3px] pt-px text-[17px] leading-6", NUM)}>
        <span className={clsx("w-[210px] text-[16px] font-normal text-[#d8d8d8]", CJK)}>Fluence Energy(FLNC.US)</span>
        <span className="text-[#ff0000]">11.18</span><span className="text-white ml-px">s</span>
        <span className="text-[#ff0000] ml-[10px]"><UpMark /><span className="ml-[3px]">0.97</span></span>
        <span className="text-white ml-2">13.86M</span>
      </div>
      <div className="flex-1 flex min-h-0">
        <AxisY labels={LY} top={112} height={838} className="w-[88px] text-right [&>span]:pr-[3px]" />
        <div className="relative flex-1">
          <IntradayChart />
          <span className="absolute left-3 top-1 text-[14px] text-white font-['Liberation_Serif',serif]">SAR</span>
          <span className={clsx("absolute text-[15px] leading-[18px] text-[#ff0000] left-[51%] top-[7.3%]", NUM)}>12.10</span>
          <span className={clsx("absolute text-[15px] leading-[18px] text-[#00a8ff] left-[7%] top-[32.9%]", NUM)}>10.27</span>
        </div>
      </div>
      <div className="h-[31px] shrink-0 flex">
        <div className="w-[88px] flex items-start pl-[3px] pt-[9px]">
          <button aria-label="Alert"><BellIcon className="size-[19px]" /></button>
          <button aria-label="Extended hours"><ClockIcon className="size-[19px]" /></button>
        </div>
        <div className={clsx("relative flex-1 text-[16px] text-[#ffff00]", NUM)}>
          <svg viewBox="124 0 378 8" preserveAspectRatio="none" className="absolute top-0 w-full h-2" stroke="#ffff00" shapeRendering="crispEdges">
            {[134, 179, 224, 269, 314, 337, 359, 382, 404, 427, 450, 472, 495].map((x) => <path key={x} d={`M${x + 0.5} 0V7`} />)}
          </svg>
          {LX_LABELS.map(([t, x]) => (
            <span key={t} className="absolute top-[9px] -translate-x-1/2" style={{ left: `${((x - 124) / 378) * 100}%` }}>{t}</span>
          ))}
        </div>
      </div>
    </div>
  );
}

function ScrollBar() {
  return (
    <div className="w-5 shrink-0 flex flex-col">
      <button aria-label="Scroll up" className="h-4 rounded-t bg-[#868686] text-white flex justify-center items-center"><ChevronUp className="size-3" strokeWidth={3.5} /></button>
      <div className="flex-1 border-x-2 border-[#4a4a4a] bg-black" />
      <div className="h-[15px] bg-[#7a7a7a] rounded-sm" />
      <button aria-label="Scroll down" className="mt-px h-[15px] bg-[#868686] text-white flex justify-center items-center"><ChevronDown className="size-3" strokeWidth={3.5} /></button>
      <button aria-label="Tick filter" className="mt-px h-5">
        <svg viewBox="0 0 20 20" className="size-5">
          <rect width="20" height="20" fill="#dcdcdc" />
          <path d="M5 1V12" stroke="#c01818" strokeWidth="3" />
          <path d="M0 15H10M5 11V19" stroke="#c01818" strokeWidth="2.500" />
          <path d="M10 5H17M10 9H17" stroke="#888" />
        </svg>
      </button>
      <button aria-label="Extended hours"><ClockIcon className="size-5" /></button>
    </div>
  );
}

const TONE: Record<string, string> = { r: "text-[#ff0000]", g: "text-[#00e000]", w: "text-white" };

function QuoteColumn() {
  return (
    <div className="w-[468px] shrink-0 flex flex-col text-white">
      <dl className={clsx("grid grid-cols-2 gap-x-[19px] pt-[2px] pl-px pr-[3px] text-[16px] leading-[19px]", CJK)}>
        {QUOTES.flatMap(([a, av, ac, b, bv, bc]) => [
          <div key={a} className="flex justify-between">
            <dt>{a}</dt>
            <dd className={clsx("text-[15px]", NUM, ac)}>{av}</dd>
          </div>,
          <div key={b} className="flex justify-between">
            <dt>{b}</dt>
            <dd className={clsx("text-[15px]", NUM, bc)}>{bv}</dd>
          </div>,
        ])}
      </dl>
      <div className={clsx("mt-[3px] mr-[2px] h-[29px] border-y border-[#6a6a6a] flex items-center pl-[2px] pr-[3px] text-[16px]", CJK)}>
        <span className="w-[88px]">盤後時段</span>
        <span className={clsx("w-[84px] text-[15px] text-[#ff0000]", NUM)}>11.60<span className="text-white font-normal text-[12px]">=</span></span>
        <span className={clsx("text-[16px] text-[#ff0000]", NUM)}><UpMark />0.42(+3.76%)</span>
        <span className="ml-auto mr-[22px]">盤後量</span>
        <span className={clsx("text-[15px]", NUM)}>31.0K</span>
      </div>
      <div className="mt-[58px] flex pr-[2px]">
        <table className="flex-1 table-fixed border-collapse text-right leading-[19px] [&_td]:p-0 [&_th]:p-0">
          <colgroup>
            <col className="w-[78px]" /><col className="w-[74px]" /><col className="w-[74px]" /><col className="w-[74px]" /><col className="w-[68px]" /><col className="w-[78px]" />
          </colgroup>
          <thead>
            <tr className={clsx("h-[18px] text-[16px] leading-[18px]", CJK)}>
              {["時間", "買進", "賣出", "成交", "單量", "總量"].map((h) => <th key={h} className="font-normal">{h}</th>)}
            </tr>
          </thead>
          <tbody className={clsx("text-[15px] bg-[#0d201f]", NUM)}>
            {TICKS.map(([time, bid, ask, last, vol, tone], i) => (
              <tr key={i} className="h-[19px]">
                <td>{time}</td>
                <td className="text-[#ff0000]">{bid}</td>
                <td className="text-[#ff0000]">{ask}</td>
                <td className="text-[#ff0000]">{last}</td>
                <td className={TONE[tone]}>{vol}</td>
                <td>2.12M</td>
              </tr>
            ))}
          </tbody>
        </table>
        <div className="flex -mb-[17px]"><ScrollBar /></div>
      </div>
      <div className={clsx("mt-auto flex items-end text-[16px] leading-4 text-[#b0b0b0] pr-px pb-px", CJK)}>
        <div role="tablist" className="flex">
          {["明細", "價量表", "分價表", "分價圖", "分量表", "警示", "支撐壓力"].map((t, i) => (
            <button
              key={t}
              role="tab"
              aria-selected={i === 0}
              className={clsx("relative px-[5px] h-[17px]", i === 0 && "ml-1 bg-linear-to-t from-[#6a6a00] to-[#1c1c00] text-[#ffff00] [clip-path:polygon(0_0,100%_0,92%_100%,8%_100%)]")}
            >
              <svg viewBox="0 0 60 17" preserveAspectRatio="none" className="absolute inset-0 size-full" fill="none" stroke="#8a8a8a">
                <path d="M0 1L5 16H55L60 1" />
              </svg>
              <span className="relative">{t}</span>
            </button>
          ))}
        </div>
        <div className="ml-auto flex gap-[3px] pb-[2px]">
          {["M9 3L5 6.500L9 10Z", "M3 5L6.500 10L10 5Z", "M5 3L9 6.500L5 10Z", "M5 3H10V5H12L8 9L4 5"].map((d) => (
            <button key={d} aria-label="Tab scroll">
              <svg viewBox="0 0 13 13" className="size-[13px]"><circle cx="6.500" cy="6.500" r="6.500" fill="#444a50" /><path d={d} fill="#1ea0f0" /></svg>
            </button>
          ))}
        </div>
      </div>
    </div>
  );
}

/* ---------- right panel ---------- */

const RX = [1120, 1155, 1189, 1224, 1259, 1293, 1328, 1363, 1397, 1432, 1467, 1536, 1605, 1640, 1675, 1710, 1744, 1779];
const RX_LABELS: [string, number][] = [["04", 1119], ["05", 1154], ["06", 1189], ["07", 1223], ["16", 1258], ["17", 1292], ["18", 1328], ["19", 1363], ["20", 1396], ["21", 1431], ["22", 1466], ["09/25", 1536], ["02", 1604], ["03", 1639], ["04", 1674], ["05", 1709], ["06", 1743], ["07", 1777]];

function Pane(props: { top: number; height: number; rows: number[]; labels: [string, number][]; legend: ReactNode; border?: string; className: string; children: ReactNode }) {
  const { top, height, rows, labels, legend, border = "#b8b8b8", className, children } = props;
  return (
    <section className={clsx("flex min-h-0", className)}>
      <div className="relative flex-1 min-w-0">
        <svg viewBox={`980 ${top} 836 ${height}`} preserveAspectRatio="none" className="absolute inset-0 size-full">
          <rect x="1120" y={top} width="330" height={height} fill={SHADE} />
          <rect x="1675" y={top} width="139" height={height} fill={SHADE} />
          <g stroke={GRID} shapeRendering="crispEdges">
            {RX.map((x) => <path key={x} d={`M${x + 0.5} ${top}V${top + height}`} />)}
            {rows.map((y) => <path key={y} d={`M980 ${y + 0.5}H1816`} />)}
          </g>
          {children}
          <rect x="980.500" y={top + 0.5} width="835" height={height - 1} fill="none" stroke={border} shapeRendering="crispEdges" />
        </svg>
        <div className={clsx("absolute left-[2px] top-[2px] flex items-center h-[18px] text-[15px] text-white whitespace-nowrap", CJK)}>{legend}</div>
      </div>
      <AxisY labels={labels} top={top} height={height} className="w-[98px] text-white [&>span]:pl-[3px]" />
    </section>
  );
}

const Eq = () => <span className="ml-1 text-[14px] font-normal font-['DejaVu_Sans',sans-serif]">=</span>;

function TechCharts() {
  return (
    <div className="flex-1 min-h-0 flex flex-col gap-[2px]">
      <Pane
        className="flex-[328_1_0%]"
        top={102}
        height={328}
        rows={[109, 131, 154, 176, 199, 221, 244, 266, 288, 311, 333, 356, 378, 401, 423]}
        labels={[["12.08", 132], ["11.90", 155], ["11.73", 177], ["11.55", 200], ["11.38", 222], ["11.20", 245], ["11.03", 267], ["10.85", 289], ["10.68", 312], ["10.50", 334], ["10.33", 357], ["10.15", 379], ["9.98", 402]]}
        legend={<>
          <span className="w-[102px]">當日成本線</span>
          <span className="text-[#ff9900]">均價</span>
          <span className={clsx("ml-[6px] text-[#ff9900]", NUM)}>11.54</span><Eq />
        </>}
      >
        {[{ c: PRICE_A, x: 970 }, { c: PRICE_B, x: 1430 }].map(({ c, x }) => (
          <g key={x}>
            <Strokes d={c.down} x={x} y={100} color="#ffffff" />
            <Strokes d={c.up} x={x} y={100} color="#ff0000" />
          </g>
        ))}
        {[{ c: THIN_A, x: 970 }, { c: THIN_B, x: 1430 }].map(({ c, x }) => (
          <g key={x} shapeRendering="crispEdges">
            <Strokes d={c.white} x={x} y={100} color="#ffffff" />
            <Strokes d={c.red} x={x} y={100} color="#ff0000" />
          </g>
        ))}
        <Trace points={ORANGE_A} x={970} y={100} color="#ff9900" width={3} />
        <Trace points={ORANGE_B} x={1430} y={100} color="#ff9900" width={3} />
      </Pane>

      <Pane
        className="flex-[164_1_0%]"
        top={432}
        height={164}
        rows={[473, 514, 554]}
        labels={[["30K", 474], ["20K", 515], ["10K", 555]]}
        legend={<>
          <span className="w-[67px]">成交量</span><span>成交量</span>
          <span className={clsx("ml-[6px]", NUM)}>0</span><Eq />
          <span className={clsx("ml-5 text-[#f07020]", NUM)}>MA5 216</span><Eq />
          <span className={clsx("ml-[22px] text-[#ffff00]", NUM)}>MA10 108</span><DownMark />
        </>}
      >
        <g shapeRendering="crispEdges">
          <path d={BARS.red} stroke="#ff0000" />
          <path d={BARS.green} stroke="#00e800" />
          <path d={BARS.white} stroke="#ffffff" />
        </g>
        <polyline points={average(5)} fill="none" stroke="#f07020" />
        <polyline points={average(10)} fill="none" stroke="#ffff00" />
      </Pane>

      <Pane
        className="flex-[164_1_0%]"
        top={598}
        height={164}
        rows={[652, 707]}
        labels={[["0", 653], ["-50", 708]]}
        legend={<>
          <span className="w-[147px]">分鐘與日威廉指標</span>
          <span className="text-[#ff8050]">30分威廉指標1</span><span className={clsx("ml-[5px] text-[#ff8050]", NUM)}>-34.21</span><Eq />
          <span className="ml-[22px] text-[#ff0000]">30分威廉指標2</span><span className={clsx("ml-[5px] text-[#ff0000]", NUM)}>-29.59</span><Eq />
          <span className="ml-[22px] text-[#00e800]">30分威廉指標3</span><span className={clsx("ml-[5px] text-[#00ff00]", NUM)}>-24.45</span><Eq />
        </>}
      >
        <Trace points={WR.orangeA} x={970} y={430} color="#ff8050" />
        <Trace points={WR.orangeB} x={1430} y={430} color="#ff8050" />
        <Trace points={WR.redA} x={970} y={430} color="#ff0000" />
        <Trace points={WR.redA2} x={970} y={430} color="#ff0000" />
        <Trace points={WR.redB} x={1430} y={430} color="#ff0000" />
        <Trace points={WR.greenA} x={970} y={430} color="#00ff00" />
        <Trace points={WR.greenB} x={1430} y={430} color="#00ff00" />
      </Pane>

      <Pane
        className="flex-[165_1_0%]"
        top={764}
        height={165}
        rows={[805, 846, 887]}
        border="#e84080"
        labels={[["0.2", 806], ["0.0", 847], ["-0.2", 888]]}
        legend={<div className={clsx("flex items-center", NUM)}>
          <span className="w-[76px]">MACD</span>
          <span className="text-[#f07020]">DIF18-32 -0.0068</span><DownMark />
          <span className="ml-[30px] text-[#ffff00]">MACD12 -0.0027</span><DownMark />
          <span className="ml-[26px] text-[#ff00ff]">OSC -0.0041</span><DownMark />
        </div>}
      >
        <Humps list={OSC_A} x={970} y={430} />
        <Humps list={OSC_B} x={1430} y={430} />
        <Trace points={MACD.orangeA} x={970} y={430} color="#f07020" />
        <Trace points={MACD.orangeB} x={1430} y={430} color="#f07020" />
        <Trace points={MACD.yellowA} x={970} y={430} color="#ffff00" />
        <Trace points={MACD.yellowB} x={1430} y={430} color="#ffff00" />
      </Pane>
    </div>
  );
}

function DateSelect({ value, label }: { value: string; label: string }) {
  return (
    <div className="relative w-[109px] h-[18px] bg-white">
      <select aria-label={label} className="appearance-none size-full pl-[3px] pt-[2px] text-[17px] leading-[18px] text-black bg-white font-['Liberation_Serif',serif]">
        <option>{value}</option>
      </select>
      <span className="absolute right-[2px] top-px w-4 h-4 bg-[#eee] border border-[#777] flex items-center justify-center pointer-events-none">
        <Caret className="text-black" />
      </span>
    </div>
  );
}

const GoButton = () => <button className="block w-5 h-[18px] bg-[#4d9fc8] text-white text-[12px] leading-[18px] font-['Liberation_Sans',sans-serif]">GO</button>;

function ToolCell({ label, children }: { label: string; children: ReactNode }) {
  return (
    <button aria-label={label} className="w-5 h-[18px] bg-[#4d9fc8] border-r border-[#2f7ca6] flex items-center justify-center text-white">
      {children}
    </button>
  );
}

function TechFooter() {
  return (
    <div className={clsx("h-[21px] shrink-0 flex items-start pl-px text-white", CJK)}>
      <DateSelect value="2025/09/23" label="起始日" />
      <span className="w-[22px] text-center text-[16px] leading-[18px]">~</span>
      <DateSelect value="2025/09/24" label="結束日" />
      <GoButton />
      <label htmlFor="reserve" className="ml-[10px] text-[20px] leading-[19px]">保留空間</label>
      <div className="ml-2 w-[58px] h-[18px] bg-white flex">
        <input id="reserve" defaultValue="3" className="min-w-0 flex-1 pl-[3px] text-[17px] leading-[18px] text-black outline-none" />
        <div className="w-[17px] flex flex-col p-px gap-px">
          <button aria-label="Increase" className="flex-1 bg-[#ddd] flex items-center justify-center"><Caret className="rotate-180 text-black" /></button>
          <button aria-label="Decrease" className="flex-1 bg-[#ddd] flex items-center justify-center"><Caret className="text-black" /></button>
        </div>
      </div>
      <GoButton />
      <div className="flex-1 flex h-[18px] border-y border-[#333] bg-black">
        <button aria-label="Scroll left" className="w-4 bg-[#666] flex items-center justify-center"><ChevronLeft className="size-3" strokeWidth={3.5} /></button>
        <div className="flex-1" />
        <div className="w-[15px] bg-[#666] rounded-sm" />
        <button aria-label="Scroll right" className="w-4 bg-[#666] flex items-center justify-center"><ChevronRight className="size-3" strokeWidth={3.5} /></button>
      </div>
      <div className="flex">
        <ToolCell label="Move"><svg viewBox="0 0 14 14" className="size-[14px]" fill="none" stroke="currentColor" strokeWidth="1.500"><path d="M12 12L3 3M3 10V3H10" /></svg></ToolCell>
        <ToolCell label="Extended hours"><svg viewBox="0 0 16 16" className="size-4"><circle cx="8" cy="8" r="7" fill="#fff" /><path d="M9 3V9H5" stroke="#e07020" strokeWidth="1.500" fill="none" /></svg></ToolCell>
        <ToolCell label="Zoom out"><svg viewBox="0 0 14 14" className="size-[14px]"><path d="M2 7H12" stroke="#ffe000" strokeWidth="2" /></svg></ToolCell>
        <ToolCell label="Zoom in"><svg viewBox="0 0 14 14" className="size-[14px]"><path d="M1 7H13M7 1V13" stroke="#ffe000" strokeWidth="2" /></svg></ToolCell>
        <ToolCell label="Undo"><svg viewBox="0 0 14 14" className="size-[14px]" fill="none" stroke="currentColor" strokeWidth="1.500"><path d="M1 4V11H7M1 11L7 4Q13 1 12 12" /></svg></ToolCell>
        <ToolCell label="Fit"><svg viewBox="0 0 14 14" className="size-[14px]" fill="none" stroke="currentColor" strokeWidth="1.500"><rect x="4" y="4" width="6" height="6" /><path d="M1 5V1H5M9 1H13V5M13 9V13H9M5 13H1V9" /></svg></ToolCell>
        <ToolCell label="Settings"><Wrench className="size-[14px]" strokeWidth={1.75} /></ToolCell>
        <button aria-label="Alert"><BellIcon className="w-5 h-[18px]" /></button>
      </div>
    </div>
  );
}

function TechPanel() {
  return (
    <section className="flex-1 min-w-0 flex flex-col border border-white bg-black">
      <PanelTab title="Fluence Energy 技術分析" />
      <div className={clsx("h-[26px] shrink-0 flex items-start pl-px pt-px text-[16px] leading-6 text-[#b8b8b8]", CJK)}>
        <span className="w-[207px]">Fluence Energy(FLNC.US)</span>
        <span className="w-[69px]">1分鐘圖</span>
        <ClockIcon className="size-[15px] mt-1" />
        <span className={clsx("ml-[6px] text-[17px] text-white", NUM)}>25<span className={clsx("text-[16px] font-normal", CJK)}>日</span> 07:55</span>
        <span className="ml-3">開</span><span className={clsx("ml-2 text-[17px] text-[#ff0000]", NUM)}>11.65</span>
        <span className="ml-3">高</span><span className={clsx("ml-2 text-[17px] text-[#ff0000]", NUM)}>11.65</span>
        <span className="ml-3">收</span><span className={clsx("ml-2 text-[17px] text-[#ff0000]", NUM)}>11.60</span>
        <span className={clsx("ml-[6px] text-[17px] text-white", NUM)}>s</span>
        <span className="ml-[18px]">量</span><span className={clsx("ml-2 text-[17px] text-white", NUM)}>1081</span>
      </div>
      <div className="flex-1 min-h-0 flex flex-col pl-[3px]"><TechCharts /></div>
      <div className="h-[31px] shrink-0 pl-[3px] pr-[98px] text-[16px] leading-5 text-[#ffff00] font-['DejaVu_Sans',sans-serif]">
        <div className="relative">
          <svg viewBox="980 0 836 9" preserveAspectRatio="none" className="block w-full h-[9px]" stroke="#ffff00" shapeRendering="crispEdges">
            {[981, ...RX].map((x) => <path key={x} d={`M${x + 0.5} 0V9`} />)}
          </svg>
          <span className="absolute left-px top-[11px]">09/24 00:00</span>
          {RX_LABELS.map(([t, x]) => (
            <span key={x} className={clsx("absolute top-[11px] -translate-x-1/2", t.length > 2 && "font-bold")} style={{ left: `${((x - 980) / 836) * 100}%` }}>{t}</span>
          ))}
        </div>
      </div>
      <TechFooter />
    </section>
  );
}

/* ---------- bottom bars ---------- */

function NewsBar() {
  return (
    <div className="h-[26px] shrink-0 flex items-center border-t border-white bg-[#202020] text-white pl-[9px] pr-[5px] text-[16px] font-['Open_Sans','Noto_Sans_CJK_TC',sans-serif] font-light">
      <time className="w-[99px] text-[15px]">09/25 15:38</time>
      <a href="#news" className="whitespace-nowrap">【公告】同道獵聘 致登記股東通知信函及回條 - 刊發2025中期報告</a>
      <div className="ml-auto w-4 flex flex-col gap-px text-white">
        <button aria-label="Previous news" className="h-[11px] bg-[#777] flex items-center justify-center"><ChevronUp className="size-[10px]" strokeWidth={4} /></button>
        <button aria-label="Next news" className="h-[11px] bg-[#777] flex items-center justify-center"><ChevronDown className="size-[10px]" strokeWidth={4} /></button>
      </div>
    </div>
  );
}

function StatusCheck() {
  return (
    <svg viewBox="0 0 15 15" className="size-[15px] ml-[3px]">
      <rect x="0.500" y="0.500" width="14" height="14" fill="#fffbd0" stroke="#999" />
      <path d="M3 7L6 11L12 3" fill="none" stroke="#2a9a20" strokeWidth="2" />
    </svg>
  );
}

function StatusBar() {
  return (
    <footer className={clsx("h-[21px] shrink-0 flex items-center border-t border-[#8a8aa8] bg-linear-to-b from-[#dde1ef] to-[#b4bdd4] text-[12px] text-black whitespace-nowrap", CJK)}>
      <div className="h-full flex items-start bg-[#eceef6]">
        <button className="w-[77px] h-[17px] pl-[17px] text-[13px] leading-[17px] font-bold bg-[#ffcc20] [clip-path:polygon(8px_0,100%_0,100%_100%,20px_100%)]">未命名3</button>
        {["美股綜合排行", "台股個股分析", "國際股市行情"].map((t) => (
          <button key={t} className="h-[17px] w-[84px] leading-4 bg-[#eeece8] border-r-2 border-b border-[#8a8a9a] rounded-b-[3px]">{t}</button>
        ))}
      </div>
      <span className="ml-[9px] text-[#12246c]">本系統為嘉實資訊XQ系列產品</span>
      <div className="ml-auto flex items-center pr-[6px]">
        <div className="flex gap-[2px] mr-[3px]">
          {["下單匣", "下單列", "回報列", "主動回報"].map((t) => (
            <button key={t} className="h-[17px] px-[2px] leading-4 bg-[#f0efea] border border-[#fff] border-b-[#888] border-r-[#888]">{t}</button>
          ))}
        </div>
        <svg viewBox="0 0 16 16" className="size-4 ml-px">
          <rect x="1" y="2" width="14" height="13" fill="#777" />
          <path d="M2 6H14M2 9H14M2 12H14M5 6V15M8 6V15M11 6V15" stroke="#ddd" />
        </svg>
        <svg viewBox="0 0 16 16" className="size-4 ml-[13px]" fill="none" stroke="#555">
          <rect x="1.500" y="1.500" width="13" height="13" fill="#dfe3ee" />
          <path d="M5 11L11 5M7 5H11V9" strokeWidth="1.500" />
        </svg>
        <svg viewBox="0 0 16 16" className="size-4 ml-[15px]">
          <path d="M5 7V5Q5 1.500 8 1.500Q11 1.500 11 5V7" fill="none" stroke="#888" strokeWidth="2" />
          <rect x="2.500" y="7" width="11" height="8" rx="1" fill="#bbb" stroke="#888" />
          <path d="M8 9V13" stroke="#777" />
        </svg>
        <span className="ml-[14px]">登入:</span>
        <svg viewBox="0 0 15 15" className="size-[15px] ml-[3px]">
          <rect width="15" height="15" fill="#d8e8c8" />
          <circle cx="4" cy="11" r="1.500" fill="#3a9a20" />
          <path d="M3 6.500Q8 7 8.500 12M3 3Q11 3.500 12 12" fill="none" stroke="#3a9a20" strokeWidth="2" />
        </svg>
        <span className="ml-3">報價:</span><StatusCheck />
        <span className="ml-3">回報:</span><StatusCheck />
        <time className="ml-[15px] text-[#12246c]">15:39:03</time>
      </div>
    </footer>
  );
}

// yellow frames and arrows that point at the clock buttons
function Callouts() {
  return (
    <svg viewBox="0 0 1920 1032" preserveAspectRatio="none" className="absolute inset-0 size-full pointer-events-none" fill="none" stroke="#ffff00" strokeWidth="2">
      <rect x="49" y="949" width="36" height="38" />
      <rect x="939" y="934" width="46" height="39" />
      <rect x="1236" y="66" width="50" height="44" />
      <path d="M353 680L102 931M748 737L925 915M1071 275L1219 127" strokeWidth="3" />
      <g fill="#ffff00" stroke="none">
        <path d="M94 939L99 923L109 933Z" />
        <path d="M933 923L917 918L928 908Z" />
        <path d="M1227 119L1223 134L1212 124Z" />
      </g>
    </svg>
  );
}

export default function App() {
  return (
    <div className="relative min-h-screen flex flex-col bg-black overflow-x-hidden">
      <TitleBar />
      <ToolBar />
      <main className="flex-1 flex border-t-2 border-l-2 border-r-2 border-[#8c8c8c]">
        <aside className={clsx("w-[29px] shrink-0 flex flex-col items-end", CJK)}>
          <button aria-label="Page list" className="mt-4 mr-[10px] text-[#1fbcb4]">
            <svg viewBox="0 0 10 5" className="w-[10px] h-[5px]" fill="currentColor"><path d="M0 0H10L5 5Z" /></svg>
          </button>
          <button className="mt-3 w-7 h-24 flex flex-col items-center justify-center text-[16px] leading-4 text-[#ffff00] bg-linear-to-r from-[#a8e0dc] via-[#1fa8a0] to-[#1fbcb4] [clip-path:polygon(0_12px,100%_0,100%_100%,0_84px)]">
            {["未", "命", "名", "3"].map((c) => <span key={c}>{c}</span>)}
          </button>
        </aside>
        <div className="flex-1 min-w-0 flex gap-[2px] p-px border-l-[3px] border-y-2 border-r-2 border-[#1fbcb4] bg-black">
          <section className="flex-1 min-w-0 flex flex-col border border-[#ff0000] bg-black">
            <PanelTab title="Fluence Energy 商品盤勢" />
            <div className="flex-1 flex min-h-0">
              <IntradayColumn />
              <QuoteColumn />
            </div>
          </section>
          <TechPanel />
        </div>
      </main>
      <NewsBar />
      <StatusBar />
      <Callouts />
    </div>
  );
}
